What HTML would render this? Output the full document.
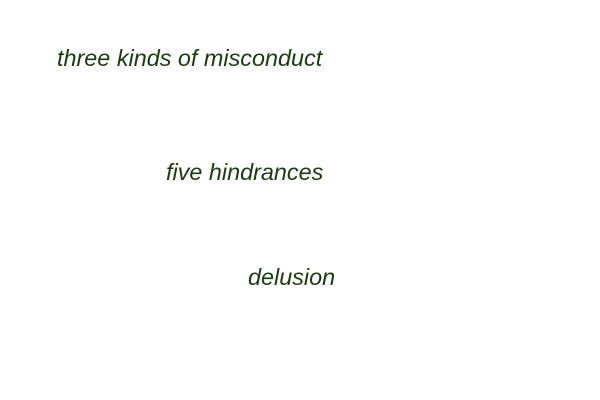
<html><head><style>
body{margin:0;width:600px;height:400px;background:#fff;position:relative;font-family:"Liberation Sans",sans-serif;font-style:italic;color:#1c3a12;font-size:23.4px}
div{position:absolute;white-space:nowrap;line-height:1}
</style></head><body>
<div style="left:57px;top:47px">three kinds of misconduct</div>
<div style="left:166px;top:161px">five hindrances</div>
<div style="left:248px;top:266px">delusion</div>
</body></html>
